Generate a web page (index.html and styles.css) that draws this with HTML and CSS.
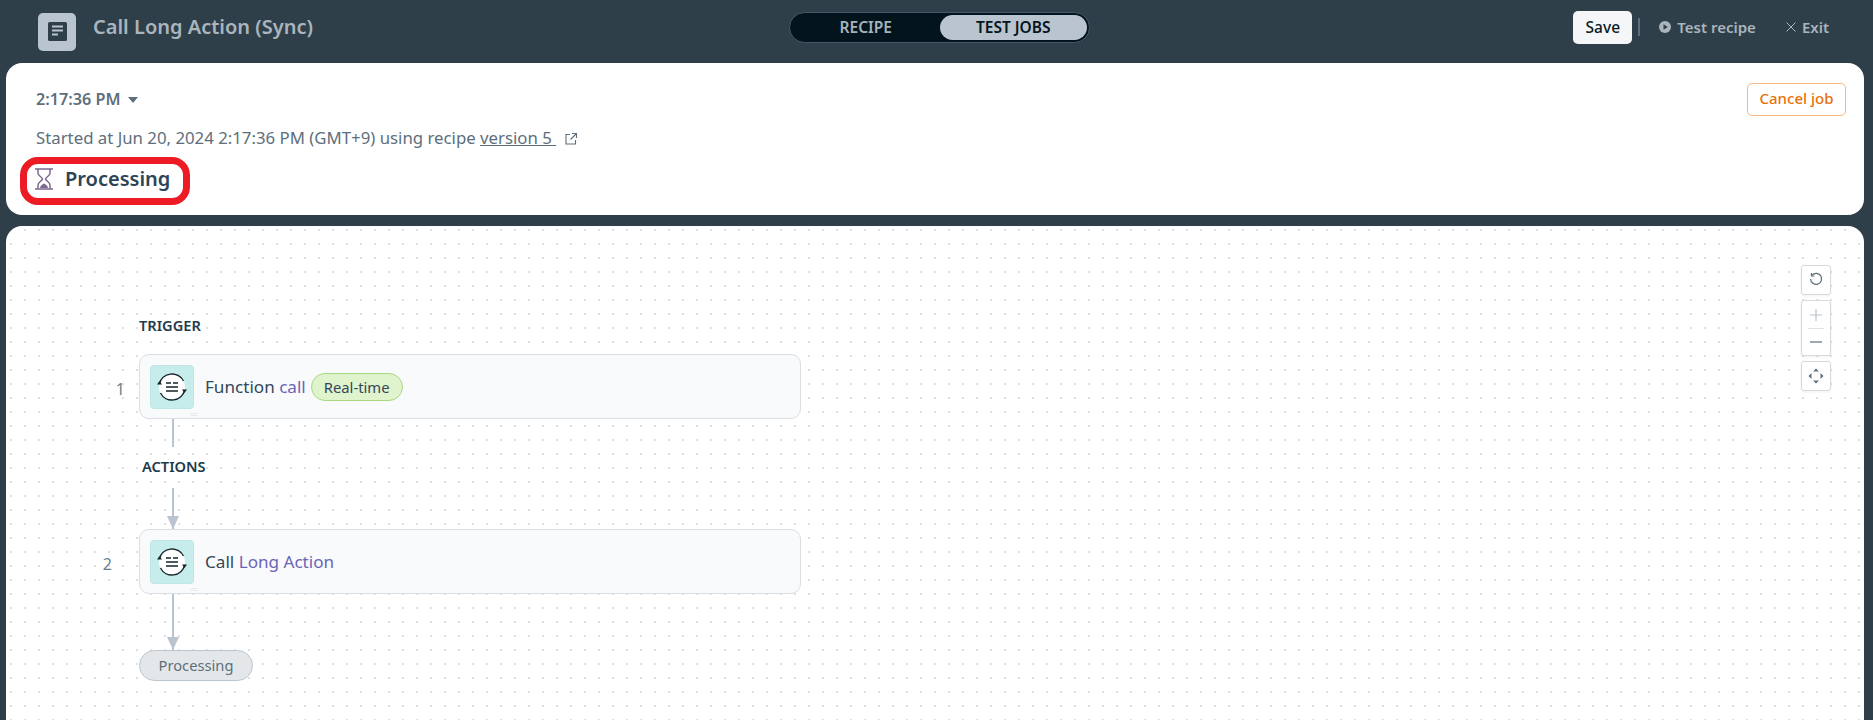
FILE: index.html
```html
<!DOCTYPE html>
<html lang="en">
<head>
  <meta charset="UTF-8">
  <title>Call Long Action (Sync)</title>
  <link rel="stylesheet" href="styles.css">
</head>
<body>
  <!-- Top bar -->
  <header class="topbar">
    <div class="topbar-left">
      <span class="recipe-icon">
        <svg width="19" height="19" viewBox="0 0 19 19"><rect width="19" height="19" rx="1.5" fill="#2f3f4a"/><path d="M4 4.500h11M4 8.500h11M4 12.500h6" stroke="#b9c4ce" stroke-width="2"/></svg>
      </span>
      <span class="recipe-title">Call Long Action (Sync)</span>
    </div>
    <div class="toggle">
      <span class="toggle-item">RECIPE</span>
      <span class="toggle-item active">TEST JOBS</span>
    </div>
    <div class="topbar-right">
      <button class="save-button">Save</button>
      <span class="separator"></span>
      <span class="bar-link test-link">
        <svg width="12" height="12" viewBox="0 0 12 12"><circle cx="6" cy="6" r="6" fill="#a9b4bc"/><path d="M4.500 3.200 8.800 6 4.500 8.800z" fill="#2f3f4a"/></svg>
        Test recipe
      </span>
      <span class="bar-link exit-link">
        <svg width="10" height="10" viewBox="0 0 10 10"><path d="M.5.5l9 9M9.500.5l-9 9" stroke="#a9b4bc" stroke-width="1"/></svg>
        Exit
      </span>
    </div>
  </header>

  <!-- Job summary -->
  <section class="card job-card">
    <div class="job-info">
      <div class="job-time">2:17:36 PM <span class="caret"></span></div>
      <div class="job-started">
        Started at Jun 20, 2024 2:17:36 PM (GMT+9) using recipe <a class="version-link">version 5&nbsp;</a>
        <svg class="external" width="14" height="14" viewBox="0 0 14 14" fill="none" stroke="#5d6f7c" stroke-width="1.100"><path d="M6 2.500H2v9.500h9.500V8M8 1.500h4.500V6M12.500 1.500 6.500 7.500"/></svg>
      </div>
      <div class="job-status">
        <svg width="18" height="22" viewBox="0 0 18 22" fill="none" stroke="#7a6a8c" stroke-width="1.500"><path d="M0 1h18M0 21h18M3 1v4c0 3 4 4 4.500 6C7 13 3 14 3 17v4M15 1v4c0 3-4 4-4.500 6 .5 2 4.500 3 4.500 6v4"/><path d="M5 20c0-2 2.500-4 4-4.500 1.500.5 4 2.500 4 4.500z" fill="#7a6a8c" stroke="none"/></svg>
        <span>Processing</span>
      </div>
    </div>
    <button class="cancel-button">Cancel job</button>
  </section>

  <!-- Recipe canvas -->
  <section class="card canvas">
    <div class="zoom-controls">
      <div class="zoom-box">
        <svg width="16" height="16" viewBox="0 0 16 16" fill="none" stroke="#5d6f7c" stroke-width="1.200"><path d="M4 3.200A5.500 5.500 0 1 1 2.600 7"/><path d="M3.500 1v3h3"/></svg>
      </div>
      <div class="zoom-box zoom-pair">
        <svg width="14" height="14" viewBox="0 0 14 14"><path d="M7 1v12M1 7h12" stroke="#b9c4ce" stroke-width="1.200"/></svg>
        <span class="zoom-divider"></span>
        <svg width="14" height="14" viewBox="0 0 14 14"><path d="M1 7h12" stroke="#5d6f7c" stroke-width="1.200"/></svg>
      </div>
      <div class="zoom-box">
        <svg width="18" height="18" viewBox="0 0 18 18" fill="#5d6f7c"><path d="M9 1.500l3 3H6zM9 16.500l-3-3h6zM1.500 9l3-3v6zM16.500 9l-3 3V6z"/></svg>
      </div>
    </div>

    <div class="flow">
      <div class="flow-label">TRIGGER</div>
      <div class="step">
        <span class="step-num">1</span>
        <div class="node">
          <span class="app-icon">
            <svg width="32" height="32" viewBox="0 0 32 32" fill="none" stroke="#16242c"><circle cx="16" cy="16" r="13" fill="#fff" stroke="none"/><path d="M3.300 13A13 13 0 0 1 27.500 10M28.700 19A13 13 0 0 1 4.500 22" stroke-width="1.400"/><path d="M1 13.500h5l-2.500-3.500zM31 18.500h-5l2.500 3.500z" fill="#16242c" stroke="none"/><path d="M10 12h5M17 12h5M10 16h12M10 20h12" stroke-width="1.300"/></svg>
          </span>
          <span class="node-text">Function <span class="node-link">call</span></span>
          <span class="realtime">Real-time</span>
          <span class="node-mark"></span>
        </div>
      </div>
      <div class="line short"></div>
      <div class="flow-label actions">ACTIONS</div>
      <div class="line arrow"></div>
      <div class="step">
        <span class="step-num two">2</span>
        <div class="node">
          <span class="app-icon">
            <svg width="32" height="32" viewBox="0 0 32 32" fill="none" stroke="#16242c"><circle cx="16" cy="16" r="13" fill="#fff" stroke="none"/><path d="M3.300 13A13 13 0 0 1 27.500 10M28.700 19A13 13 0 0 1 4.500 22" stroke-width="1.400"/><path d="M1 13.500h5l-2.500-3.500zM31 18.500h-5l2.500 3.500z" fill="#16242c" stroke="none"/><path d="M10 12h5M17 12h5M10 16h12M10 20h12" stroke-width="1.300"/></svg>
          </span>
          <span class="node-text">Call <span class="node-link">Long Action</span></span>
          <span class="node-mark"></span>
        </div>
      </div>
      <div class="line arrow long"></div>
      <div class="end-pill">Processing</div>
    </div>
  </section>
</body>
</html>
```

FILE: styles.css
```css
/* General Styling */
html, body {
  height: 720px;
  overflow: hidden;
}

body {
  margin: 0;
  background: #2f3f4a;
  font-family: "Noto Sans", "Liberation Sans", sans-serif;
  color: #2c4456;
}

button {
  font-family: inherit;
  cursor: pointer;
}

/* Top bar */
.topbar {
  display: grid;
  grid-template-columns: 751px 301px 1fr;
  align-items: center;
  height: 63px;
  padding: 0 44px 9px 38px;
  box-sizing: border-box;
}

.topbar-left {
  display: flex;
  align-items: center;
  gap: 17px;
  padding-top: 9px;
}

.recipe-icon {
  display: flex;
  align-items: center;
  justify-content: center;
  width: 38px;
  height: 38px;
  border-radius: 5px;
  background: #b9c4ce;
}

.recipe-title {
  font-size: 20px;
  font-weight: 600;
  color: #aab5bd;
  margin-top: -11px;
}

.toggle {
  display: flex;
  height: 31px;
  padding: 2px;
  box-sizing: border-box;
  border: 1px solid #46596a;
  border-radius: 16px;
  background: #04141c;
  font-size: 15.500px;
  font-weight: 600;
}

.toggle-item {
  flex: 1;
  display: flex;
  align-items: center;
  justify-content: center;
  color: #a6b2bb;
  border-radius: 14px;
}

.toggle-item.active {
  background: #b9c4ce;
  color: #04141c;
}

.topbar-right {
  display: flex;
  align-items: center;
  justify-content: flex-end;
  font-size: 15px;
}

.save-button {
  width: 59px;
  height: 33px;
  border: none;
  border-radius: 5px;
  background: #f4f6f8;
  color: #0b1a22;
  font-size: 15.500px;
  font-weight: 500;
}

.separator {
  width: 2px;
  height: 18px;
  margin: 0 19px 0 6px;
  background: #5d6f7c;
}

.bar-link {
  display: flex;
  align-items: center;
  gap: 6px;
  color: #a9b4bc;
  font-weight: 600;
}

.exit-link {
  margin-left: 30px;
}

/* Cards */
.card {
  margin: 0 9px 0 6px;
  border-radius: 16px;
  background: #fff;
}

.job-card {
  display: flex;
  justify-content: space-between;
  align-items: flex-start;
  height: 152px;
  padding: 20px 18px 0 14px;
  box-sizing: border-box;
  margin-bottom: 11px;
}

.job-time {
  margin: 6px 0 0 16px;
  font-size: 16.200px;
  font-weight: 600;
  line-height: 20px;
  color: #5d6f7c;
}

.caret {
  display: inline-block;
  margin: 0 0 2px 3px;
  border: 5px solid transparent;
  border-top: 6px solid #5d6f7c;
  border-bottom: 0;
}

.job-started {
  margin: 19px 0 0 16px;
  font-size: 16.800px;
  line-height: 20px;
  color: #5d6f7c;
}

.version-link {
  text-decoration: underline;
}

.external {
  margin-left: 3px;
  vertical-align: -2px;
}

.job-status {
  display: inline-flex;
  align-items: center;
  gap: 12px;
  width: 170px;
  height: 48px;
  margin-top: 9px;
  padding: 0 0 5px 8px;
  box-sizing: border-box;
  border: 7px solid #ed1c24;
  border-radius: 18px;
  font-size: 20px;
  font-weight: 600;
}

.cancel-button {
  width: 99px;
  height: 33px;
  padding: 0 0 3px;
  border: 1px solid #f5b77d;
  border-radius: 5px;
  background: #fff;
  color: #e8710a;
  font-size: 15px;
  font-weight: 500;
}

/* Canvas */
.canvas {
  position: relative;
  height: 520px;
  background-color: #fff;
  background-image: radial-gradient(circle, #dde1e5 0.800px, transparent 1.600px);
  background-size: 14px 14px;
  background-position: -2px -3px;
}

.zoom-controls {
  position: absolute;
  top: 39px;
  right: 33px;
  display: flex;
  flex-direction: column;
  gap: 5px;
}

.zoom-box {
  display: flex;
  align-items: center;
  justify-content: center;
  width: 30px;
  height: 30px;
  box-sizing: border-box;
  border: 1px solid #d5dbe0;
  border-radius: 3px;
  background: #fff;
  box-shadow: 0 1px 3px rgba(47, 63, 74, 0.08);
}

.zoom-pair {
  flex-direction: column;
  height: 56px;
  gap: 6px;
}

.zoom-divider {
  width: 16px;
  height: 1px;
  background: #dfe3e7;
}

.flow {
  padding: 89px 0 0 133px;
}

.flow-label {
  height: 20px;
  margin-bottom: 19px;
  font-size: 14.600px;
  font-weight: 600;
  line-height: 20px;
  color: #1f3a4c;
}

.flow-label.actions {
  margin: 9px 0 12px 3px;
}

.step {
  position: relative;
}

.step-num {
  position: absolute;
  top: 24px;
  right: 100%;
  margin-right: 14px;
  font-size: 16px;
  line-height: 22px;
  color: #6b7f8d;
}

.step-num.two {
  margin-right: 27px;
}

.node {
  position: relative;
  display: flex;
  align-items: center;
  width: 662px;
  height: 65px;
  padding-left: 10px;
  box-sizing: border-box;
  border: 1px solid #d9dee3;
  border-radius: 10px;
  background: #f9fafc;
  font-size: 17.100px;
}

.app-icon {
  display: flex;
  align-items: center;
  justify-content: center;
  width: 44px;
  height: 44px;
  border: 1px solid #bfe6e6;
  border-radius: 4px;
  box-sizing: border-box;
  background: #c7ecec;
}

.node-text {
  margin-left: 11px;
  color: #33475a;
}

.node-link {
  color: #6a65b5;
}

.realtime {
  display: flex;
  align-items: center;
  height: 28px;
  margin-left: 5px;
  padding: 0 12px;
  box-sizing: border-box;
  border: 1px solid #a8d981;
  border-radius: 14px;
  background: #dff3cd;
  font-size: 14.800px;
  color: #33475a;
}

.node-mark {
  position: absolute;
  left: 50px;
  bottom: 2px;
  width: 8px;
  height: 3px;
  border: 1px solid #e6eaee;
  border-radius: 2px;
  box-sizing: border-box;
}

.line {
  position: relative;
  width: 2px;
  margin-left: 33px;
  background: #b9c4ce;
}

.line.short {
  height: 28px;
}

.line.arrow {
  height: 41px;
}

.line.arrow.long {
  height: 56px;
}

.line.arrow::after {
  content: "";
  position: absolute;
  left: -5px;
  bottom: 0;
  border: 6px solid transparent;
  border-top: 13px solid #b9c4ce;
  border-bottom: 0;
}

.end-pill {
  display: flex;
  align-items: center;
  justify-content: center;
  width: 114px;
  height: 31px;
  padding-bottom: 2px;
  box-sizing: border-box;
  border: 1px solid #bcc6cf;
  border-radius: 16px;
  background: #e4e7ea;
  font-size: 14.700px;
  color: #5d6f7c;
}
```
